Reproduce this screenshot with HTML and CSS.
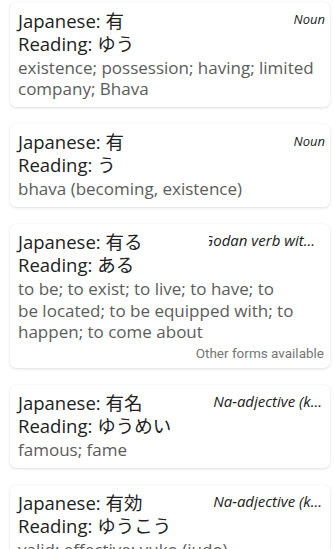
FILE: index.html
```html
<!DOCTYPE html>
<html>
<head>
<meta charset="utf-8">
<link rel="stylesheet" href="styles.css">
</head>
<body>
<div class="list">
  <div class="card">
    <div class="head">
      <div class="title">Japanese: 有</div>
      <div class="pos"><span>Noun</span></div>
    </div>
    <div class="title">Reading: ゆう</div>
    <div class="def">existence; possession; having; limited company; Bhava</div>
  </div>
  <div class="card">
    <div class="head">
      <div class="title">Japanese: 有</div>
      <div class="pos"><span>Noun</span></div>
    </div>
    <div class="title">Reading: う</div>
    <div class="def">bhava (becoming, existence)</div>
  </div>
  <div class="card">
    <div class="head">
      <div class="title">Japanese: 有る</div>
      <div class="pos pos-long pos-clip"><span>Godan verb wit...</span></div>
    </div>
    <div class="title">Reading: ある</div>
    <div class="def def-narrow">to be; to exist; to live; to have; to be located; to be equipped with; to happen; to come about</div>
    <div class="other">Other forms available</div>
  </div>
  <div class="card">
    <div class="head">
      <div class="title">Japanese: 有名</div>
      <div class="pos pos-long"><span>Na-adjective (k...</span></div>
    </div>
    <div class="title">Reading: ゆうめい</div>
    <div class="def">famous; fame</div>
  </div>
  <div class="card">
    <div class="head">
      <div class="title">Japanese: 有効</div>
      <div class="pos pos-long"><span>Na-adjective (k...</span></div>
    </div>
    <div class="title">Reading: ゆうこう</div>
    <div class="def">valid; effective; yuko (judo)</div>
  </div>
</div>
</body>
</html>
```
FILE: styles.css
```css
html, body {
  margin: 0;
  padding: 0;
  background: #ffffff;
}
body {
  font-family: "Open Sans", "Noto Sans CJK JP", sans-serif;
  color: #212121;
  height: 549px;
  overflow: hidden;
}
.list {
  display: flex;
  flex-direction: column;
  gap: 16.5px;
  padding: 2px 4px 0 10px;
}
.card {
  background: #ffffff;
  border-radius: 6px;
  box-shadow: 0 1px 3px rgba(0, 0, 0, 0.12), 0 0 1px rgba(0, 0, 0, 0.08);
  padding: 6.5px 5px 7.5px 8px;
  display: flex;
  flex-direction: column;
}
.head {
  display: flex;
  justify-content: space-between;
  align-items: flex-start;
}
.title {
  font-size: 18.5px;
  line-height: 23px;
  color: #212121;
  white-space: nowrap;
}
.pos {
  display: flex;
  justify-content: flex-end;
  overflow: hidden;
  white-space: nowrap;
  font-style: italic;
  font-size: 13px;
  line-height: 18px;
  margin-top: 1.5px;
  color: #212121;
}
.pos span {
  flex: none;
}
.pos-long {
  font-size: 15px;
  margin-top: 1.4px;
  margin-right: 3px;
}
.pos-clip {
  width: 106px;
  margin-right: 10px;
}
.def {
  margin-top: 2px;
  margin-right: 7px;
  font-size: 17px;
  line-height: 21.5px;
  color: #5c5c5c;
}
.def-narrow {
  max-width: 278px;
}
.other {
  align-self: flex-end;
  margin-top: 2px;
  margin-right: 1px;
  font-family: Roboto, "Noto Sans", sans-serif;
  font-size: 13.5px;
  line-height: 16px;
  color: #757575;
}
```
